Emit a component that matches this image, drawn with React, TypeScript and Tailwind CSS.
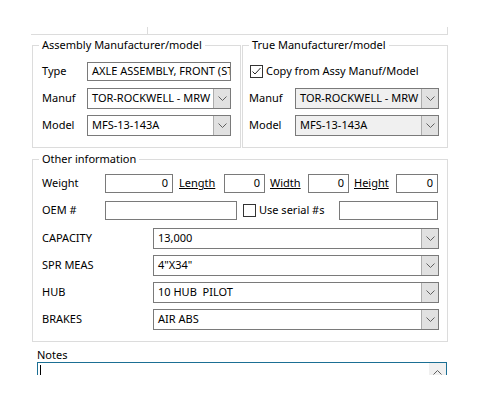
import React from 'react';

const FONT = "font-['Noto_Sans',sans-serif]";

const Chevron = ({ up = false }: { up?: boolean }) => (
  <svg width="9" height="5" viewBox="0 0 9 5" className={up ? 'rotate-180' : ''}>
    <path d="M0.5 0.5 L4.5 4.5 L8.5 0.5" fill="none" stroke="#606060" strokeWidth="1" />
  </svg>
);

const TextBox = ({ value = '', w, right = false }: { value?: string; w: string; right?: boolean }) => (
  <div
    className={`${w} h-[19px] border border-[#7a7a7a] bg-white px-[4px] flex items-center overflow-hidden whitespace-nowrap ${
      right ? 'justify-end' : ''
    }`}
  >
    {value}
  </div>
);

const Combo = ({ value, w, disabled = false }: { value: string; w: string; disabled?: boolean }) => (
  <div className={`${w} h-[21px] flex border border-[#7a7a7a] ${disabled ? 'bg-[#f0f0f0]' : 'bg-white'}`}>
    <div className="flex-1 px-[4px] flex items-center overflow-hidden whitespace-pre">{value}</div>
    <div className="w-[17px] bg-[#e1e1e1] border-l border-[#adadad] flex items-center justify-center">
      <Chevron />
    </div>
  </div>
);

const Check = ({ checked = false }: { checked?: boolean }) => (
  <div className="w-[13px] h-[13px] border border-[#333] bg-white flex items-center justify-center">
    {checked && (
      <svg width="11" height="11" viewBox="0 0 11 11">
        <path d="M1.5 5.5 L4 8 L9.5 2" fill="none" stroke="#222" strokeWidth="1" />
      </svg>
    )}
  </div>
);

// group box: legend sits in the top border, content padding lives on the inner div
const Group = ({ title, className, children }: { title: string; className: string; children: React.ReactNode }) => (
  <fieldset className={`border border-[#dcdcdc] ${className}`}>
    <legend className="ml-[6px] px-[3px] leading-[16px]">{title}</legend>
    {children}
  </fieldset>
);

const comboRows = [
  ['CAPACITY', '13,000'],
  ['SPR MEAS', '4"X34"'],
  ['HUB', '10 HUB  PILOT'],
  ['BRAKES', 'AIR ABS'],
];

export default function App() {
  return (
    <div className={`w-[500px] h-[400px] bg-white text-black text-[11px] ${FONT}`}>
      <div className="h-[375px] overflow-hidden">
        {/* bottom edge of the group above */}
        <div className="ml-[31px] w-[417px] h-[35px] flex">
          <div className="w-[116px] border-b border-[#dcdcdc]" />
          <div className="flex-1 border-b border-[#dcdcdc] flex justify-between items-end">
            <div className="h-[7px] border-l border-[#dcdcdc]" />
            <div className="h-[7px] border-r border-[#dcdcdc]" />
          </div>
        </div>

        <div className="ml-[32px] mt-[2px] flex gap-[1px]">
          <Group title="Assembly Manufacturer/model" className="w-[209px]">
            <div className="flex flex-col pt-[9px] pl-[9px] pr-[8px] pb-[11px]">
              <div className="flex items-center h-[18px]">
                <span className="w-[45px]">Type</span>
                <TextBox w="w-[144px]" value="AXLE ASSEMBLY, FRONT (STEER)" />
              </div>
              <div className="flex items-center mt-[8px]">
                <span className="w-[45px]">Manuf</span>
                <Combo w="w-[144px]" value="TOR-ROCKWELL - MRW" />
              </div>
              <div className="flex items-center mt-[6px]">
                <span className="w-[45px]">Model</span>
                <Combo w="w-[144px]" value="MFS-13-143A" />
              </div>
            </div>
          </Group>

          <Group title="True Manufacturer/model" className="w-[206px]">
            <div className="flex flex-col pt-[9px] pl-[6px] pr-[8px] pb-[11px]">
              <div className="flex items-center h-[18px] gap-[3px] pl-[1px]">
                <Check checked />
                <span>Copy from Assy Manuf/Model</span>
              </div>
              <div className="flex items-center mt-[8px]">
                <span className="w-[46px]">Manuf</span>
                <Combo w="w-[144px]" value="TOR-ROCKWELL - MRW" disabled />
              </div>
              <div className="flex items-center mt-[6px]">
                <span className="w-[46px]">Model</span>
                <Combo w="w-[144px]" value="MFS-13-143A" disabled />
              </div>
            </div>
          </Group>
        </div>

        <div className="ml-[32px] mt-[3px]">
          <Group title="Other information" className="w-[416px]">
            <div className="flex flex-col pt-[7px] pl-[9px] pr-[8px] pb-[11px]">
              <div className="flex items-center">
                <span className="w-[63px]">Weight</span>
                <TextBox w="w-[68px]" value="0" right />
                <span className="w-[51px] pl-[6px] underline">Length</span>
                <TextBox w="w-[41px]" value="0" right />
                <span className="w-[43px] pl-[5px] underline">Width</span>
                <TextBox w="w-[41px]" value="0" right />
                <span className="w-[47px] pl-[5px] underline">Height</span>
                <TextBox w="w-[42px]" value="0" right />
              </div>
              <div className="flex items-center mt-[8px]">
                <span className="w-[63px]">OEM #</span>
                <TextBox w="w-[132px]" />
                <div className="ml-[6px]">
                  <Check />
                </div>
                <span className="w-[83px] pl-[3px]">Use serial #s</span>
                <TextBox w="w-[99px]" />
              </div>
              <div className="flex flex-col gap-[6px] mt-[8px]">
                {comboRows.map(([label, value]) => (
                  <div key={label} className="flex items-center">
                    <span className="w-[111px]">{label}</span>
                    <Combo w="w-[286px]" value={value} />
                  </div>
                ))}
              </div>
            </div>
          </Group>
        </div>

        <div className="ml-[37px] w-[410px] mt-[5px]">
          <div className="leading-[15px]">Notes</div>
          <div className="h-[30px] border border-[#1b6f94] bg-white flex">
            <div className="flex-1 pl-[2px] pt-[2px]">
              <div className="w-px h-[13px] bg-black" />
            </div>
            <div className="w-[17px] bg-[#f0f0f0] flex justify-center pt-[7px]">
              <Chevron up />
            </div>
          </div>
        </div>
      </div>
    </div>
  );
}
